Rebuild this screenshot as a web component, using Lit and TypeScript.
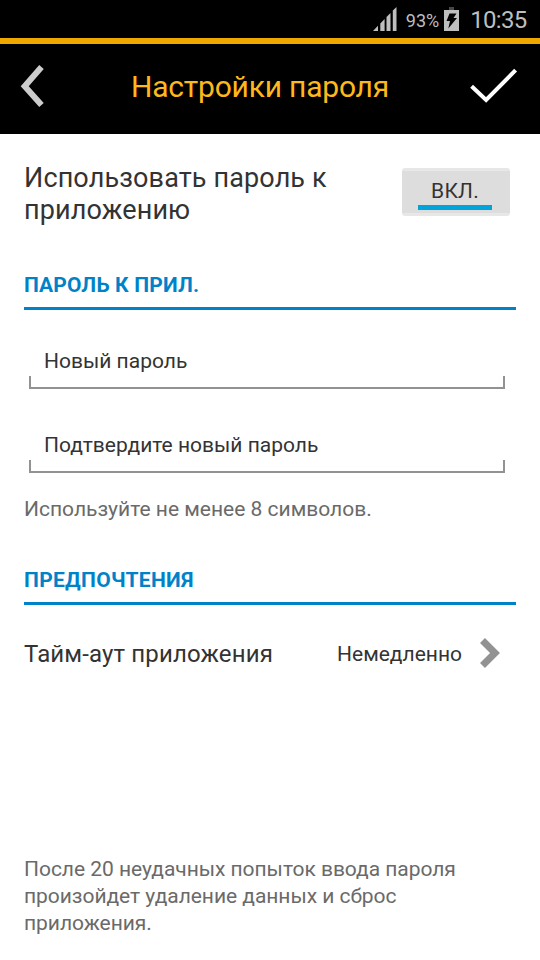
import { LitElement, html, css } from "lit";
import { customElement } from "lit/decorators.js";

@customElement("app-root")
export class AppRoot extends LitElement {
  static styles = css`
    :host { display: flex; flex-direction: column; box-sizing: border-box; width: 540px; height: 960px; background: #fff; color: #333; font-family: Roboto, "Noto Sans", sans-serif; overflow: hidden; white-space: nowrap; }
    svg { display: block; flex: none; }
    .status { display: flex; box-sizing: border-box; height: 38px; background: #000; align-items: center; justify-content: flex-end; padding-right: 13.5px; color: #bebebe; }
    .percent { font-size: 18px; margin: 2px 5px 0 9px; }
    .time { font-size: 24px; margin: 1px 0 0 11px; letter-spacing: -0.7px; }
    .head { display: flex; box-sizing: border-box; height: 96px; background: #000; border-top: 6px solid #f0a800; align-items: center; justify-content: space-between; padding: 0 22px 6px 20px; }
    .title { color: #ffb81c; font-size: 30px; font-weight: 400; margin: 0 0 0 4px; letter-spacing: -0.2px; }
    main { flex: 1; display: flex; flex-direction: column; padding: 28px 24px 23px; }
    .use { display: flex; justify-content: space-between; height: 64px; font-size: 27px; line-height: 32px; white-space: pre-line; letter-spacing: 0.13px; }
    .toggle { box-sizing: border-box; width: 108px; height: 48px; margin: 6px 6px 0 0; background: #ddd; border: solid #e7e7e7; border-width: 3px 0; border-radius: 3px; font-size: 21px; line-height: 24px; padding: 8px 18px 0 16px; text-align: center; letter-spacing: 0.2px; }
    .mark { height: 5px; background: #00a4da; margin-top: 2px; }
    h2 { box-sizing: border-box; height: 40px; margin: 44px 0 0; border-bottom: 3px solid #0082c8; color: #0082c8; font-size: 21px; font-weight: 700; line-height: 30px; letter-spacing: 0.18px; }
    .field { height: 43px; margin: 37px 11px 0 5px; }
    .field + .field { margin-top: 41px; }
    .label { font-size: 21px; line-height: 28px; height: 29px; padding-left: 15px; }
    .line { box-sizing: border-box; height: 13px; border: 2px solid #929292; border-top: 0; }
    .hint { font-size: 21px; line-height: 27px; color: #6a6a6a; margin-top: 22px; }
    .hint + h2 { margin-top: 42px; letter-spacing: 0.3px; }
    .row { display: flex; align-items: center; font-size: 24px; margin-top: 33px; height: 32px; padding-right: 16px; }
    .row svg { margin-bottom: 2px; }
    .name { letter-spacing: 0.14px; }
    .value { font-size: 21px; margin: 0 18px 0 auto; }
    .warn { white-space: pre-line; margin-top: auto; letter-spacing: -0.04px; }
  `;
  render() {
    return html`
      <div class="status">
        <svg width="24" height="24" fill="#bebebe"><path d="M0 24l5-5.2V24zM7.3 24v-7.5l4.3-4.4V24zM13.5 24V10.1l4-4.1v18zM19.8 24V3.6L23.5 0v24z"/></svg>
        <span class="percent">93%</span>
        <svg width="15" height="24" viewBox="0 0 15 24"><path fill="#484848" d="M5 0h5v3H5z"/><path fill="#bebebe" d="M0 3h15v21H0z"/><path fill="#000" d="M5.5 6.5h7l-3 4.5H13L4.3 21.5 6 14H2.5z"/></svg>
        <span class="time">10:35</span>
      </div>
      <header class="head">
        <svg width="26" height="44" fill="none" stroke="#ccc" stroke-width="6"><path d="M21.5 3 4.7 22.2 21.5 41"/></svg>
        <h1 class="title">Настройки пароля</h1>
        <svg width="48" height="36" fill="none" stroke="#fff" stroke-width="4"><path d="m1.6 18.2 14.5 13.8L45.6 2.2"/></svg>
      </header>
      <main>
        <div class="use"><span>Использовать пароль к
приложению</span><div class="toggle">ВКЛ.<div class="mark"></div></div></div>
        <h2>ПАРОЛЬ К ПРИЛ.</h2>
        <div class="field"><div class="label">Новый пароль</div><div class="line"></div></div>
        <div class="field"><div class="label">Подтвердите новый пароль</div><div class="line"></div></div>
        <div class="hint">Используйте не менее 8 символов.</div>
        <h2>ПРЕДПОЧТЕНИЯ</h2>
        <div class="row"><span class="name">Тайм-аут приложения</span><span class="value">Немедленно</span>
          <svg width="20" height="30" fill="none" stroke="#929292" stroke-width="7"><path d="m2.5 2.5 12.5 12.5L2.5 27.5"/></svg></div>
        <div class="hint warn">После 20 неудачных попыток ввода пароля
произойдет удаление данных и сброс
приложения.</div>
      </main>`;
  }
}
